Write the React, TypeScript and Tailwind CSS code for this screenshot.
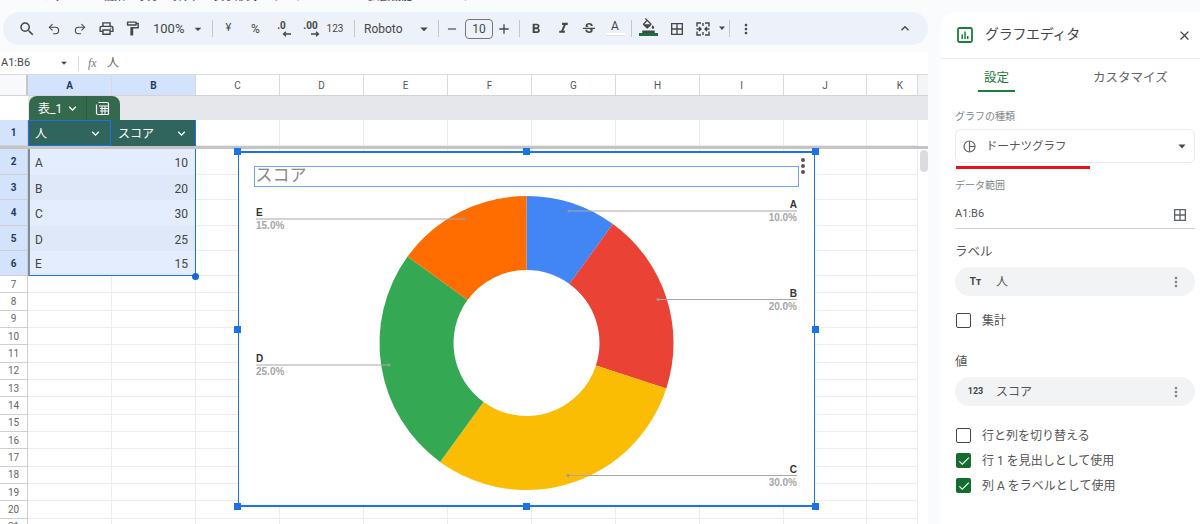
import React from "react";
import {
  MdSearch, MdOutlinePrint, MdOutlineFormatPaint, MdArrowDropDown, MdRemove, MdAdd,
  MdFormatBold, MdFormatItalic, MdStrikethroughS, MdOutlineFormatColorFill, MdBorderAll, MdMoreVert,
  MdExpandLess, MdClose, MdKeyboardArrowDown, MdCheck,
} from "react-icons/md";
import { Undo2, Redo2 } from "lucide-react";

const SANS = "font-['Roboto','Noto_Sans_CJK_JP',sans-serif]";
const COLS = ["A", "B", "C", "D", "E", "F", "G", "H", "I", "J", "K"];

function Sep() {
  return <div className="w-px h-[17px] bg-[#c7c7c7]" />;
}

function Slot({ w, children }: { w: string; children: React.ReactNode }) {
  return <div className={`${w} flex items-center justify-center shrink-0`}>{children}</div>;
}

function Toolbar() {
  const ic = "text-[#444746]";
  return (
    <div className="ml-[3px] shrink-0 w-[925px] h-[33px] rounded-full bg-[#edf2fa] flex items-center pl-[10px] text-[#444746] text-[13px]">
      <Slot w="w-[27px]"><MdSearch size={18} className={ic} /></Slot>
      <Slot w="w-[27px]"><Undo2 size={14} strokeWidth={1.8} className={ic} /></Slot>
      <Slot w="w-[26px]"><Redo2 size={14} strokeWidth={1.8} className={ic} /></Slot>
      <Slot w="w-[27px]"><MdOutlinePrint size={17} className={ic} /></Slot>
      <Slot w="w-[25px]"><MdOutlineFormatPaint size={17} className={ic} /></Slot>
      <span className="ml-[8px] w-[37px] text-[13px]">100%</span>
      <Slot w="w-[16px]"><MdArrowDropDown size={18} className={ic} /></Slot>
      <div className="ml-[6px]"><Sep /></div>
      <Slot w="w-[31px]"><span className="text-[11px]">¥</span></Slot>
      <Slot w="w-[23px]"><span className="text-[12px]">%</span></Slot>
      <Slot w="w-[29px]">
        <span className="relative text-[10px] font-bold leading-none -mt-[5px]">.0
          <svg className="absolute -bottom-[6px] left-[5px]" width="9" height="6" viewBox="0 0 9 6"><path d="M9 3H2M4 .8 1.500 3 4 5.200" fill="none" stroke="#444746" strokeWidth="1.300" /></svg>
        </span>
      </Slot>
      <Slot w="w-[29px]">
        <span className="relative text-[10px] font-bold leading-none -mt-[5px]">.00
          <svg className="absolute -bottom-[6px] left-[8px]" width="9" height="6" viewBox="0 0 9 6"><path d="M0 3h7M5 .8 7.500 3 5 5.200" fill="none" stroke="#444746" strokeWidth="1.300" /></svg>
        </span>
      </Slot>
      <Slot w="w-[20px]"><span className="text-[10px]">123</span></Slot>
      <div className="ml-[9px]"><Sep /></div>
      <span className="ml-[9px] w-[50px] text-[12px]">Roboto</span>
      <Slot w="w-[20px]"><MdArrowDropDown size={18} className={ic} /></Slot>
      <div className="ml-[4px]"><Sep /></div>
      <Slot w="w-[26px]"><MdRemove size={14} className={ic} /></Slot>
      <div className="w-[28px] h-[20px] border border-[#747775] rounded-[4px] flex items-center justify-center text-[12px]">10</div>
      <Slot w="w-[22px]"><MdAdd size={16} className={ic} /></Slot>
      <div className="ml-[4px]"><Sep /></div>
      <Slot w="w-[31px]"><MdFormatBold size={16} className={ic} /></Slot>
      <Slot w="w-[24px]"><MdFormatItalic size={17} className={ic} /></Slot>
      <Slot w="w-[27px]"><MdStrikethroughS size={16} className={ic} /></Slot>
      <Slot w="w-[26px]">
        <div className="flex flex-col items-center -mt-[1px]">
          <span className="text-[12px] leading-[13px]">A</span>
          <div className="w-[19px] h-[3px] bg-white border-b border-[#dfe3e8]" />
        </div>
      </Slot>
      <div className="ml-[3px]"><Sep /></div>
      <Slot w="w-[33px]">
        <div className="flex flex-col items-center -mt-[3px]">
          <MdOutlineFormatColorFill size={15} className={ic} />
          <div className="w-[19px] h-[3px] bg-[#1e6b45]" />
        </div>
      </Slot>
      <Slot w="w-[23px]"><MdBorderAll size={16} className={ic} /></Slot>
      <Slot w="w-[30px]">
        <svg width="14" height="14" viewBox="0 0 14 14" fill="none" stroke="#444746" strokeWidth="1.400">
          <path d="M1 4.500V1h4M9 1h4v3.500M1 9.500V13h4M9 13h4V9.500M.5 7h4M3 5l2 2-2 2M13.500 7h-4M11 5 9 7l2 2M7 1v3M7 10v3" />
        </svg>
      </Slot>
      <svg width="8" height="5" viewBox="0 0 8 5" className="shrink-0"><path d="M1 .5h6L4 4z" fill="#444746" /></svg>
      <div className="ml-[3px]"><Sep /></div>
      <Slot w="w-[32px]"><MdMoreVert size={16} className={ic} /></Slot>
      <div className="flex-1" />
      <Slot w="w-[16px]"><MdExpandLess size={17} className={ic} /></Slot>
      <div className="w-[15px]" />
    </div>
  );
}

function FormulaBar() {
  return (
    <div className="mt-[7px] shrink-0 w-[928px] h-[23px] bg-white flex items-center text-[#444746] border-b border-[#dadce0]">
      <span className="ml-[1px] w-[56px] text-[11px]">A1:B6</span>
      <Slot w="w-[14px]"><MdArrowDropDown size={16} className="text-[#444746]" /></Slot>
      <div className="ml-[7px] w-px h-[15px] bg-[#dadce0]" />
      <span className="ml-[9px] w-[20px] font-['Liberation_Serif',serif] italic text-[12px] text-[#777]">fx</span>
      <span className="ml-[-1px] text-[12px] text-[#666]">人</span>
    </div>
  );
}

function ColumnHeader() {
  return (
    <div className="flex h-[21px] shrink-0 bg-white border-b border-[#d4d4d4]">
      <div className="w-[28px] bg-[#f8f9fa] border-r-2 border-[#c7c7c7]" />
      {COLS.map((c, i) => (
        <div
          key={c}
          className={`${c === "K" ? "w-[51px]" : c === "J" ? "w-[83px]" : "w-[84px]"} flex items-center justify-center text-[10px] border-r border-[#dadada] ${i < 2 ? "bg-[#d3e3fd] font-bold text-[#1f3a5f]" : "text-[#555]"}`}
        >
          <span className={c === "K" ? "ml-[16px]" : ""}>{c}</span>
        </div>
      ))}
      <div className="flex-1 bg-[#f4f5f6]" />
    </div>
  );
}

function TableBand() {
  return (
    <div className="flex h-[24px] shrink-0 bg-white">
      <div className="w-[28px]" />
      <div className="flex-1 bg-[#e6e7ea] relative">
        <div className="absolute left-[1px] top-0 w-[91px] h-[24px] bg-[#34694e] rounded-t-[8px] flex items-center text-white text-[12px]">
          <span className="ml-[9px] w-[26px] pt-[2px]">表_1</span>
          <MdKeyboardArrowDown size={15} className="ml-[1px] mt-[1px]" />
          <div className="ml-[6px] w-px h-full bg-[#2b5a42]" />
          <svg className="ml-[8px] mt-[1px]" width="15" height="15" viewBox="0 0 15 15" fill="none" stroke="#fff" strokeWidth="1.200">
            <path d="M3.500 1.500H12a1.500 1.500 0 0 1 1.500 1.500v9.500a1 1 0 0 1-1 1H3a1.500 1.500 0 0 1-1.500-1.500V3.500" />
            <path d="M4 5h9.500M5 7.500h8M5 10h8M7 5v8M10 5v8" strokeWidth="1" />
          </svg>
        </div>
      </div>
    </div>
  );
}

function RowHead({ n, active }: { n: number; active?: boolean }) {
  return (
    <div className={`w-[28px] shrink-0 flex items-center justify-center text-[10px] border-r border-b border-[#cfcfcf] ${active ? "bg-[#d3e3fd] font-bold text-[#1f3a5f]" : "bg-white text-[#666]"}`}>
      {n}
    </div>
  );
}

function EmptyCols({ from }: { from: number }) {
  return (
    <>
      {COLS.slice(from).map((c) => (
        <div key={c} className={`${c === "K" ? "w-[51px]" : c === "J" ? "w-[83px]" : "w-[84px]"} shrink-0 border-r border-b border-[#ececec]`} />
      ))}
    </>
  );
}

function HeaderRow() {
  return (
    <div className="flex h-[26px] shrink-0 bg-white">
      <RowHead n={1} active />
      <div className="w-[83px] h-full bg-[#2f655c] border border-[#1a73e8] flex items-center justify-between pl-[6px] pr-[7px] pt-[1px] text-white text-[12px]">
        <span>人</span><MdKeyboardArrowDown size={15} />
      </div>
      <div className="w-[85px] h-full bg-[#2f655c] border-r border-[#1a73e8] flex items-center justify-between pl-[7px] pr-[6px] pt-[1px] text-white text-[12px]">
        <span>スコア</span><MdKeyboardArrowDown size={15} />
      </div>
      <EmptyCols from={2} />
    </div>
  );
}

const DATA = [
  { n: 2, a: "A", b: 10, h: "h-[26px]" },
  { n: 3, a: "B", b: 20, h: "h-[25px]" },
  { n: 4, a: "C", b: 30, h: "h-[26px]" },
  { n: 5, a: "D", b: 25, h: "h-[25px]" },
  { n: 6, a: "E", b: 15, h: "h-[25px]" },
];

function DataRows() {
  return (
    <>
      {DATA.map((r, i) => (
        <div key={r.n} className={`flex ${r.h} shrink-0 bg-white`}>
          <RowHead n={r.n} active />
          <div
            className={`w-[168px] shrink-0 flex items-center justify-between pl-[5px] pr-[7px] pt-[2px] text-[12px] text-[#444] border-l-2 border-l-[#7d8f92] border-r border-r-[#1a73e8] ${i % 2 ? "bg-[#dfe8f8]" : "bg-[#e3edfd]"} ${i === 4 ? "border-b border-b-[#1a73e8]" : ""}`}
          >
            <span>{r.a}</span><span>{r.b}</span>
          </div>
          <EmptyCols from={2} />
        </div>
      ))}
    </>
  );
}

function EmptyRows() {
  const rows = [7, 8, 9, 10, 11, 12, 13, 14, 15, 16, 17, 18, 19, 20, 21];
  return (
    <>
      {rows.map((n) => (
        <div key={n} className="flex h-[17.33px] bg-white shrink-0">
          <RowHead n={n} />
          <EmptyCols from={0} />
        </div>
      ))}
    </>
  );
}

function polar(cx: number, cy: number, r: number, frac: number) {
  const t = frac * 2 * Math.PI;
  return [cx + r * Math.sin(t), cy - r * Math.cos(t)];
}

function slice(start: number, end: number) {
  const cx = 288.5, cy = 192, R = 147, r = 73;
  const [x1, y1] = polar(cx, cy, R, start);
  const [x2, y2] = polar(cx, cy, R, end);
  const [x3, y3] = polar(cx, cy, r, end);
  const [x4, y4] = polar(cx, cy, r, start);
  const large = end - start > 0.5 ? 1 : 0;
  return `M${x1} ${y1}A${R} ${R} 0 ${large} 1 ${x2} ${y2}L${x3} ${y3}A${r} ${r} 0 ${large} 0 ${x4} ${y4}Z`;
}

const SLICES = [
  { s: 0, e: 0.1, c: "#4285f4" },
  { s: 0.1, e: 0.3, c: "#ea4335" },
  { s: 0.3, e: 0.6, c: "#fbbc04" },
  { s: 0.6, e: 0.85, c: "#34a853" },
  { s: 0.85, e: 1, c: "#ff6d01" },
];

const LABELS = [
  { t: "A", p: "10.0%", y: 60, x1: 331, x2: 559, right: true },
  { t: "B", p: "20.0%", y: 148.5, x1: 420, x2: 559, right: true },
  { t: "C", p: "30.0%", y: 324.5, x1: 330, x2: 559, right: true },
  { t: "D", p: "25.0%", y: 214, x1: 18, x2: 151, right: false },
  { t: "E", p: "15.0%", y: 68, x1: 18, x2: 226, right: false },
];

function Handle({ className }: { className: string }) {
  return <div className={`absolute w-[7px] h-[7px] bg-[#1a73e8] ${className}`} />;
}

function Chart() {
  return (
    <div className="absolute left-[238px] top-[76px] w-[577px] h-[356px] bg-white border-x-[1.5px] border-x-[#1a73e8] border-y-2 border-y-[#1a73e8] box-border">
      <svg className="absolute -left-[1.5px] -top-[2px]" width="577" height="356" viewBox="0 0 577 356">
        {SLICES.map((s) => <path key={s.c} d={slice(s.s, s.e)} fill={s.c} />)}
        {LABELS.map((l) => (
          <g key={l.t}>
            <line x1={l.x1} x2={l.x2} y1={l.y} y2={l.y} stroke="#a8a8a8" strokeWidth="1.200" />
            <circle cx={l.right ? l.x1 : l.x2} cy={l.y} r="1.600" fill="#9a9a9a" />
            <text x={l.right ? l.x2 : l.x1} y={l.y - 3} textAnchor={l.right ? "end" : "start"} fontFamily="Liberation Sans, sans-serif" fontWeight="700" fontSize="10" fill="#333">{l.t}</text>
            <text x={l.right ? l.x2 : l.x1} y={l.y + 10} textAnchor={l.right ? "end" : "start"} fontFamily="Liberation Sans, sans-serif" fontWeight="700" fontSize="10" fill="#a6a6a6">{l.p}</text>
          </g>
        ))}
      </svg>
      <div className="absolute left-[14.5px] top-[13px] w-[545px] h-[21px] border border-[#6ea4f5] flex items-center pl-[1px] pb-[2px] text-[17px] text-[#8a8a8a] leading-none">スコア</div>
      <div className="absolute right-[9px] top-[5px] flex flex-col gap-[2px]">
        <div className="w-[4px] h-[4px] rounded-full bg-[#555]" />
        <div className="w-[4px] h-[4px] rounded-full bg-[#555]" />
        <div className="w-[4px] h-[4px] rounded-full bg-[#555]" />
      </div>
      <Handle className="-left-[5px] -top-[5px]" />
      <Handle className="left-[284px] -top-[5px]" />
      <Handle className="-right-[5px] -top-[5px]" />
      <Handle className="-left-[5px] top-[173px]" />
      <Handle className="-right-[5px] top-[173px]" />
      <Handle className="-left-[5px] -bottom-[5px]" />
      <Handle className="left-[284px] -bottom-[5px]" />
      <Handle className="-right-[5px] -bottom-[5px]" />
    </div>
  );
}

function Sheet() {
  return (
    <div className="relative w-[928px] flex-1 overflow-hidden flex flex-col">
      <ColumnHeader />
      <TableBand />
      <HeaderRow />
      <div className="h-[3px] bg-[#c4c4c4] shrink-0" />
      <DataRows />
      <EmptyRows />
      <div className="absolute right-0 top-[74px] w-[10px] h-[380px] bg-white">
        <div className="ml-[2px] mt-px w-[8px] h-[22px] rounded-full bg-[#dadce0]" />
      </div>
      <div className="absolute left-[192px] top-[197.5px] w-[7px] h-[7px] rounded-full bg-[#1a66d2]" />
      <Chart />
    </div>
  );
}

function Check({ on, label }: { on?: boolean; label: string }) {
  return (
    <div className="flex items-center h-[25px] text-[12px] text-[#555]">
      {on ? (
        <div className="ml-[1px] w-[15px] h-[15px] rounded-[2px] bg-[#146c2e] flex items-center justify-center">
          <MdCheck size={14} className="text-white" />
        </div>
      ) : (
        <div className="ml-[1px] w-[15px] h-[15px] rounded-[2px] border-[1.5px] border-[#444746]" />
      )}
      <span className="ml-[11px]">{label}</span>
    </div>
  );
}

function Chip({ icon, label }: { icon: React.ReactNode; label: string }) {
  return (
    <div className="w-[240px] h-[29px] rounded-full bg-[#f1f3f4] flex items-center text-[12px] text-[#555]">
      <div className="w-[41px] flex items-center justify-center text-[#444746] font-bold">{icon}</div>
      <span className="flex-1">{label}</span>
      <MdMoreVert size={16} className="mr-[11px] text-[#80868b]" />
    </div>
  );
}

function Panel() {
  return (
    <div className="w-[259px] h-[512px] mt-[12px] bg-white rounded-tl-[16px] flex flex-col text-[#444746]">
      <div className="h-[47px] shrink-0 border-b border-[#e8eaed] flex items-center">
        <svg className="ml-[16px]" width="16" height="16" viewBox="0 0 16 16">
          <rect x="1" y="1" width="14" height="14" rx="1.5" fill="none" stroke="#188038" strokeWidth="1.8" />
          <path d="M4.500 7.500h1.500v4.500H4.500zM7.300 4.500h1.500V12H7.300zM10 9h1.500v3H10z" fill="#188038" />
        </svg>
        <span className="ml-[12px] mb-[2px] text-[14px] tracking-[-0.3px] text-[#444746]">グラフエディタ</span>
        <div className="flex-1" />
        <MdClose size={15} className="mr-[8px] text-[#444746]" />
      </div>
      <div className="h-[33px] shrink-0 flex text-[12.5px]">
        <div className="ml-[37px] w-[37px] flex flex-col items-center">
          <span className="mt-[10px] leading-[18px] text-[#188038]">設定</span>
          <div className="mt-[3px] w-full h-[2px] bg-[#188038]" />
        </div>
        <span className="ml-[78px] mt-[10px] leading-[18px] text-[#5f6368]">カスタマイズ</span>
      </div>
      <div className="pl-[14px] pr-[5px] flex flex-col">
        <span className="mt-[18px] text-[10px] leading-[14px] text-[#80868b]">グラフの種類</span>
        <div className="mt-[5px] h-[34px] border border-[#e8eaed] rounded-[6px] flex items-center">
          <svg className="ml-[7px]" width="13" height="13" viewBox="0 0 13 13" fill="none" stroke="#5f6368" strokeWidth="1.2">
            <circle cx="6.5" cy="6.5" r="5.5" /><path d="M6.500 1v5.500H12M6.500 6.500V12" />
          </svg>
          <span className="ml-[10px] mt-[2px] text-[11.5px] text-[#555]">ドーナツグラフ</span>
          <div className="flex-1" />
          <svg className="mr-[8px]" width="8" height="5" viewBox="0 0 8 5"><path d="M.5.500h7L4 4.500z" fill="#444746" /></svg>
        </div>
        <div className="mt-[3px] ml-[1px] w-[134px] h-[3px] bg-[#e8111c]" />
        <span className="mt-[10px] text-[10px] leading-[14px] text-[#80868b]">データ範囲</span>
        <div className="mt-[12px] h-[19px] flex items-center justify-between">
          <span className="text-[11px] text-[#555]">A1:B6</span>
          <MdBorderAll size={16} className="mr-[7px] text-[#5f6368]" />
        </div>
        <div className="mt-[4px] h-px bg-[#d0d0d0]" />
        <span className="mt-[14px] text-[12.5px] leading-[18px] text-[#555]">ラベル</span>
        <div className="mt-[6px]">
          <Chip label="人" icon={<span className="text-[10px]">Tт</span>} />
        </div>
        <div className="mt-[12px]"><Check label="集計" /></div>
        <span className="mt-[20px] text-[12.5px] leading-[18px] text-[#555]">値</span>
        <div className="mt-[6px]">
          <Chip label="スコア" icon={<span className="text-[9px]">123</span>} />
        </div>
        <div className="mt-[17px]">
          <Check label="行と列を切り替える" />
          <Check on label="行 1 を見出しとして使用" />
          <Check on label="列 A をラベルとして使用" />
        </div>
      </div>
    </div>
  );
}

export default function App() {
  return (
    <div className={`w-[1200px] h-[524px] overflow-hidden bg-[#f9fbfd] flex ${SANS}`}>
      <div className="w-[941px] h-full flex flex-col shrink-0">
        <div className="h-[12px] overflow-hidden flex text-[11px] leading-[14px] text-[#333] pl-[43px] shrink-0">
          <div className="flex -mt-[10px] whitespace-nowrap">
            <span className="w-[60px]">ファイル</span>
            <span className="w-[36px]">編集</span>
            <span className="w-[34px]">表示</span>
            <span className="w-[40px]">挿入</span>
            <span className="w-[60px]">表示形式</span>
            <span className="w-[37px]">データ</span>
            <span className="w-[58px]">ツール</span>
            <span className="w-[72px]">拡張機能</span>
            <span className="w-[30px]">ヘルプ</span>
          </div>
        </div>
        <Toolbar />
        <FormulaBar />
        <Sheet />
      </div>
      <Panel />
    </div>
  );
}
